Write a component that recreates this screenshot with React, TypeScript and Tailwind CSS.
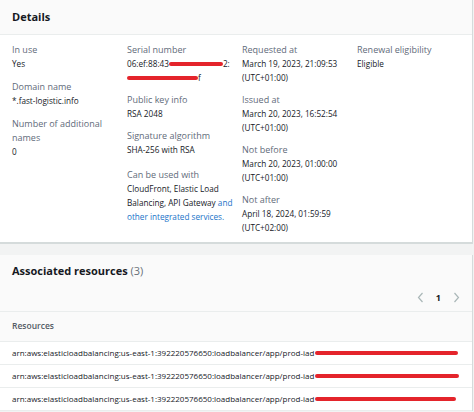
import React from "react";

const Redact = ({ w, className = "" }: { w: number; className?: string }) => (
  <span
    className={"inline-block h-[4px] rounded-full bg-[#e4242b] align-middle " + className}
    style={{ width: w }}
  />
);

const Label = ({ children }: { children: React.ReactNode }) => (
  <div className="text-[9px] leading-[14px] text-[#5f6b7a] whitespace-nowrap">{children}</div>
);
const Value = ({ children }: { children: React.ReactNode }) => (
  <div className="text-[8.2px] leading-[14px] text-[#16191f] font-medium whitespace-nowrap">{children}</div>
);

const Field = ({ label, children }: { label: React.ReactNode; children: React.ReactNode }) => (
  <div className="flex flex-col">
    <Label>{label}</Label>
    {children}
  </div>
);

export default function App() {
  const rows = [143, 144, 141];
  return (
    <div
      className="w-[474px] h-[412px] overflow-hidden bg-[#f2f3f3]"
      style={{ fontFamily: '"Open Sans", "Noto Sans", sans-serif' }}
    >
      {/* Details card */}
      <div className="w-[473px] bg-white border-r border-b-2 border-[#d5dbdb]">
        <div className="h-[35px] bg-[#fafafa] border-b border-[#eaeded] flex items-center pl-[12px]">
          <span className="text-[11px] font-bold text-[#16191f]">Details</span>
        </div>
        <div className="grid grid-cols-[115px_115px_115px_115px] pl-[12px] pt-[8px] pb-[7px]">
          <div className="flex flex-col gap-[9px]">
            <Field label="In use">
              <Value>Yes</Value>
            </Field>
            <Field label="Domain name">
              <Value>*.fast-logistic.info</Value>
            </Field>
            <Field label={<>Number of additional<br />names</>}>
              <Value>0</Value>
            </Field>
          </div>
          <div className="flex flex-col gap-[8px]">
            <Field label="Serial number">
              <Value>
                06:ef:88:43<Redact w={54} className="-mt-[1px]" />2:
              </Value>
              <Value>
                <Redact w={71} className="-mt-[1px]" />f
              </Value>
            </Field>
            <Field label="Public key info">
              <Value>RSA 2048</Value>
            </Field>
            <Field label="Signature algorithm">
              <Value>SHA-256 with RSA</Value>
            </Field>
            <div className="mt-[3px]">
              <Field label="Can be used with">
                <Value>
                  CloudFront, Elastic Load
                  <br />
                  Balancing, API Gateway <span className="text-[#1a73c8]">and</span>
                  <br />
                  <span className="text-[#1a73c8]">other integrated services.</span>
                </Value>
              </Field>
            </div>
          </div>
          <div className="flex flex-col gap-[8px]">
            <Field label="Requested at">
              <Value>March 19, 2023, 21:09:53</Value>
              <Value>(UTC+01:00)</Value>
            </Field>
            <Field label="Issued at">
              <Value>March 20, 2023, 16:52:54</Value>
              <Value>(UTC+01:00)</Value>
            </Field>
            <Field label="Not before">
              <Value>March 20, 2023, 01:00:00</Value>
              <Value>(UTC+01:00)</Value>
            </Field>
            <Field label="Not after">
              <Value>April 18, 2024, 01:59:59</Value>
              <Value>(UTC+02:00)</Value>
            </Field>
          </div>
          <div className="flex flex-col">
            <Field label="Renewal eligibility">
              <Value>Eligible</Value>
            </Field>
          </div>
        </div>
      </div>

      {/* Associated resources card */}
      <div className="mt-[11px] w-[473px] bg-[#fafafa] border-r border-[#d5dbdb]">
        <div className="pl-[12px] pt-[4px] h-[29px] flex items-center">
          <span className="text-[11px] font-bold text-[#16191f]">
            Associated resources <span className="font-normal text-[#687078]">(3)</span>
          </span>
        </div>
        <div className="h-[27px] flex items-center justify-end pr-[12px] gap-[12px]">
          <svg width="7" height="11" viewBox="0 0 7 11" fill="none">
            <path d="M5.5 1 L1.5 5.5 L5.5 10" stroke="#aab7b8" strokeWidth="1.2" />
          </svg>
          <span className="text-[9px] font-bold text-[#16191f]">1</span>
          <svg width="7" height="11" viewBox="0 0 7 11" fill="none">
            <path d="M1.5 1 L5.5 5.5 L1.5 10" stroke="#aab7b8" strokeWidth="1.2" />
          </svg>
        </div>
        <div className="border-t border-[#eaeded] h-[31px] flex items-center pl-[12px] border-b border-b-[#eaeded] bg-[#fafafa]">
          <span className="text-[8.5px] font-semibold text-[#545b64]">Resources</span>
        </div>
        {rows.map((w, i) => (
          <div
            key={i}
            className="h-[23px] bg-white border-b border-[#eaeded] flex items-center pl-[12px]"
          >
            <span className="text-[8px] text-[#16191f] whitespace-nowrap">
              arn:aws:elasticloadbalancing:us-east-1:392220576650:loadbalancer/app/prod-iad
            </span>
            <Redact w={w} className="ml-[1px]" />
          </div>
        ))}
      </div>
    </div>
  );
}
